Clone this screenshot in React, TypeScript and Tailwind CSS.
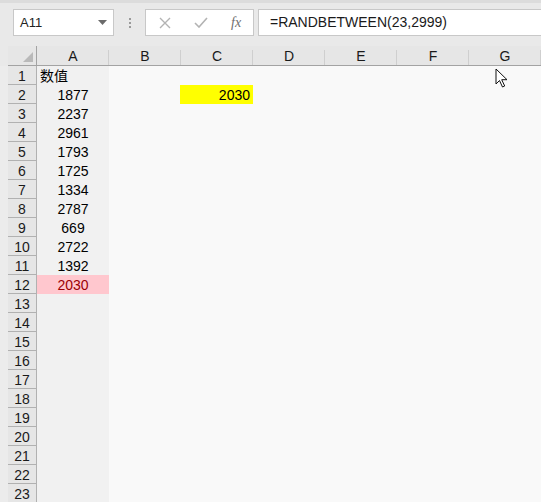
import React from "react";

const values = ["1877", "2237", "2961", "1793", "1725", "1334", "2787", "669", "2722", "1392", "2030"];
const cols = ["A", "B", "C", "D", "E", "F", "G"];
const font = { fontFamily: '"Liberation Sans", "Noto Sans CJK SC", sans-serif' };

function RowCells({ n }: { n: number }) {
  const a = n === 1 ? "数值" : values[n - 2] ?? "";
  const pink = n === 12;
  return (
    <>
      <div className="h-[19px] bg-[#ececec]" />
      <div className="flex h-[19px] items-center justify-center border-b border-r border-[#b1b1b1] bg-[#e6e6e6] pt-[1px] text-[14px] leading-[16px] text-[#1a1a1a]">
        {n}
      </div>
      <div
        className={`flex h-[19px] items-center pt-[1px] text-[14px] leading-[16px] ${
          n === 1 ? "justify-start pl-[3px]" : "justify-center"
        } ${pink ? "bg-[#ffc7ce] text-[#9c0006]" : "bg-[#f1f1f1] text-black"}`}
      >
        {a}
      </div>
      <div className="h-[19px]" />
      <div className="flex h-[19px] items-center justify-start text-[14px] leading-[16px] text-black">
        {n === 2 && (
          <span className="-ml-px flex h-[19px] w-[73px] items-center justify-end bg-[#ffff00] pr-[3px] pt-[1px]">
            2030
          </span>
        )}
      </div>
      <div className="h-[19px]" />
      <div className="h-[19px]" />
      <div className="h-[19px]" />
      <div className="h-[19px]" />
    </>
  );
}

export default function App() {
  const rows = Array.from({ length: 23 }, (_, i) => i + 1);
  return (
    <div className="relative h-[502px] w-[541px] overflow-hidden bg-[#f9f9f9]" style={font}>
      {/* formula bar */}
      <div className="h-[46px] border-t-[3px] border-[#dcdcdc] bg-[#e9e9e9] pt-[6px]">
        <div className="flex h-[27px] items-stretch">
          <div className="ml-[13px] flex w-[101px] items-center justify-between border border-[#c8c8c8] bg-white pl-[6px] pr-[6px]">
            <span className="text-[13px] text-[#222]">A11</span>
            <svg width="9" height="5" viewBox="0 0 9 5">
              <path d="M0 0h9L4.5 5z" fill="#6b6b6b" />
            </svg>
          </div>
          <div className="flex w-[31px] flex-col items-center justify-center gap-[2px]">
            <span className="h-[2px] w-[2px] bg-[#9a9a9a]" />
            <span className="h-[2px] w-[2px] bg-[#9a9a9a]" />
            <span className="h-[2px] w-[2px] bg-[#9a9a9a]" />
          </div>
          <div className="flex w-[109px] items-center border border-[#c8c8c8] bg-white">
            <svg className="ml-[13px]" width="12" height="12" viewBox="0 0 12 12">
              <path d="M1 1l10 10M11 1L1 11" stroke="#b3b3b3" strokeWidth="1.4" />
            </svg>
            <svg className="ml-[23px]" width="14" height="11" viewBox="0 0 14 11">
              <path d="M1 6l4 4 8-9" stroke="#b3b3b3" strokeWidth="1.6" fill="none" />
            </svg>
            <span
              className="ml-[23px] text-[14px] italic text-[#6e6e6e]"
              style={{ fontFamily: '"Liberation Serif", serif' }}
            >
              fx
            </span>
          </div>
          <div className="ml-[4px] flex flex-1 items-center border border-r-0 border-[#c8c8c8] bg-white pl-[11px] text-[14px] text-[#1a1a1a]">
            =RANDBETWEEN(23,2999)
          </div>
        </div>
      </div>

      {/* grid */}
      <div className="grid grid-cols-[8px_29px_repeat(7,72px)]">
        <div className="h-[20px] bg-[#e9e9e9]" />
        <div className="relative h-[20px] border-b border-r border-[#a3a3a3] bg-[#e6e6e6]">
          <svg className="absolute bottom-[3px] right-[3px]" width="10" height="10" viewBox="0 0 10 10">
            <path d="M10 0v10H0z" fill="#b9b9b9" />
          </svg>
        </div>
        {cols.map((c) => (
          <div
            key={c}
            className="relative flex h-[20px] items-end justify-center border-b border-[#a3a3a3] bg-[#e6e6e6] pb-[1px] text-[14px] leading-[16px] text-[#1a1a1a]"
          >
            {c}
            <span className="absolute bottom-0 right-0 top-[4px] w-px bg-[#cfcfcf]" />
          </div>
        ))}
        {rows.map((n) => (
          <RowCells key={n} n={n} />
        ))}
      </div>

      {/* mouse pointer */}
      <svg className="absolute left-[495px] top-[68px]" width="14" height="21" viewBox="0 0 14 21">
        <path
          d="M1 1v15l3.5-3.5 3 6.5 2.2-1-3-6.3H12z"
          fill="#fff"
          stroke="#111"
          strokeWidth="1"
          strokeLinejoin="round"
        />
      </svg>
    </div>
  );
}
